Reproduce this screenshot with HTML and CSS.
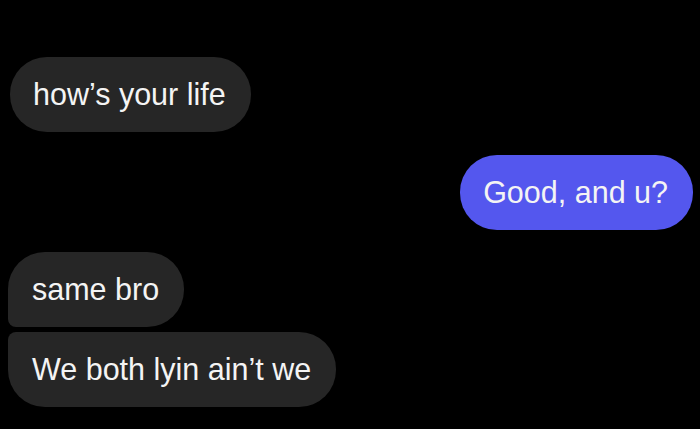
FILE: index.html
```html
<!DOCTYPE html>
<html>
<head>
<meta charset="utf-8">
<link rel="stylesheet" href="styles.css">
</head>
<body>
<div class="chat">
  <div class="msg in single">how’s your life</div>
  <div class="msg out">Good, and u?</div>
  <div class="group">
    <div class="msg in first">same bro</div>
    <div class="msg in last">We both lyin ain’t we</div>
  </div>
</div>
</body>
</html>
```
FILE: styles.css
```css
html, body {
  margin: 0;
  padding: 0;
  background: #000;
  width: 700px;
  height: 429px;
  overflow: hidden;
}
.chat {
  display: flex;
  flex-direction: column;
  padding: 57px 7px 0 10px;
  font-family: "Liberation Sans", Arial, sans-serif;
}
.msg {
  height: 75px;
  box-sizing: border-box;
  display: flex;
  align-items: center;
  padding: 0 25px 0 23px;
  font-size: 30.5px;
  color: #f4f4f4;
  border-radius: 37px;
  white-space: nowrap;
}
.in {
  background: #262626;
  align-self: flex-start;
}
.out {
  background: #5457ee;
  align-self: flex-end;
  margin-top: 23px;
}
.group {
  display: flex;
  flex-direction: column;
  gap: 5px;
  margin-top: 22px;
  margin-left: -2px;
}
.first {
  border-bottom-left-radius: 8px;
  padding-left: 24px;
}
.last {
  border-top-left-radius: 8px;
  padding-left: 24px;
}
```
